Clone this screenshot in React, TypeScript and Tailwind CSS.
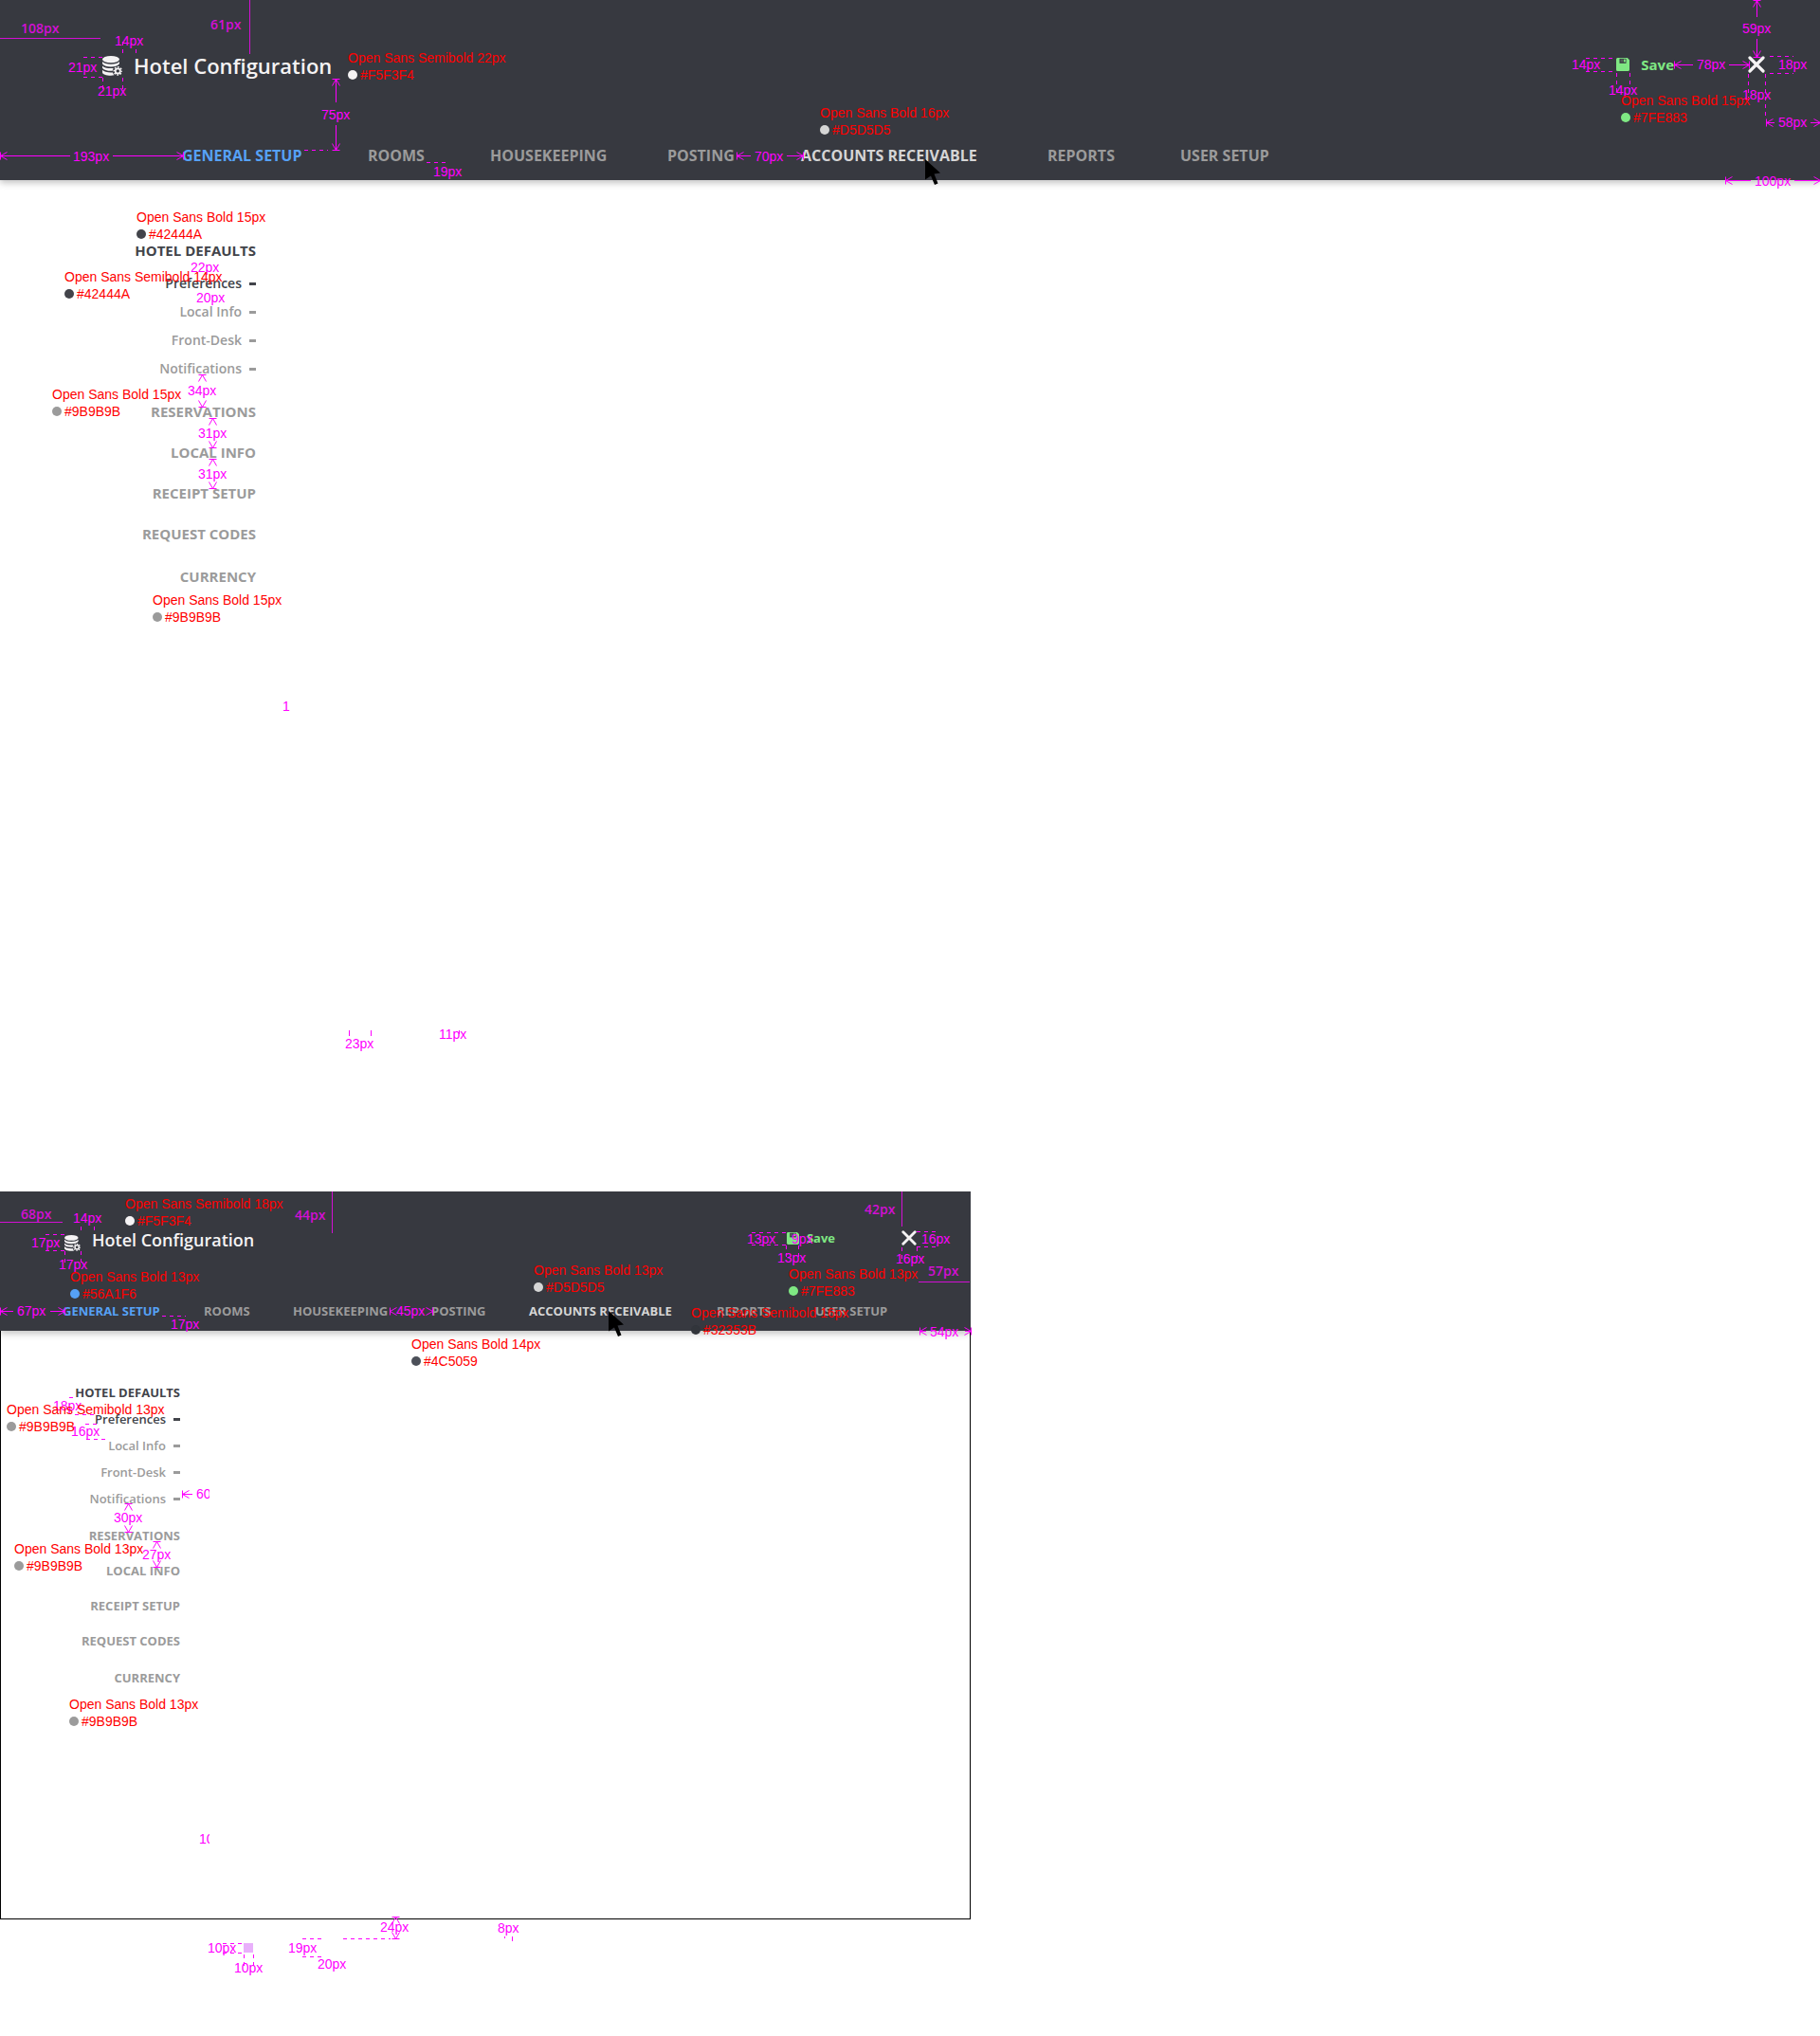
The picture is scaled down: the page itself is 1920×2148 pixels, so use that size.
import React from "react";

type Size = "large" | "compact";

const NAV = ["GENERAL SETUP", "ROOMS", "HOUSEKEEPING", "POSTING", "ACCOUNTS RECEIVABLE", "REPORTS", "USER SETUP"];
const SUB = ["Preferences", "Local Info", "Front-Desk", "Notifications"];
const SECTIONS = ["RESERVATIONS", "LOCAL INFO", "RECEIPT SETUP", "REQUEST CODES", "CURRENCY"];

function DatabaseIcon({ className }: { className: string }) {
  return (
    <svg viewBox="0 0 21 21" className={className} fill="#f5f3f4" aria-hidden="true">
      <ellipse cx="9" cy="3.6" rx="9" ry="3.6" />
      <path d="M0 6c1.600 1.900 5 2.700 9 2.700s7.400-.8 9-2.700v2.300c-1.600 2.200-5 3.100-9 3.100s-7.400-.9-9-3.100z" />
      <path d="M0 10.400c1.600 1.900 5 2.700 9 2.700 1 0 1.900 0 2.700-.1-.6.800-.9 1.700-1 2.700-.6.100-1.100.1-1.700.1-4 0-7.400-.9-9-3.100z" />
      <path d="M0 14.800c1.600 1.900 5 2.700 9 2.700h2c.2 1.100.8 2.100 1.500 2.800-1.100.3-2.300.4-3.500.4-5 0-9-1.500-9-3.500z" />
      <circle cx="16.300" cy="15.900" r="2.600" fill="none" stroke="#f5f3f4" strokeWidth="1.800" />
      <circle cx="16.300" cy="15.900" r="4.100" fill="none" stroke="#f5f3f4" strokeWidth="1.500" strokeDasharray="1.800 1.420" strokeDashoffset="0.900" />
    </svg>
  );
}

function SaveIcon({ className }: { className: string }) {
  return (
    <svg viewBox="0 0 14 14" className={className} aria-hidden="true">
      <path d="M1.500 0h10.300L14 2.200v10.300a1.500 1.500 0 0 1-1.500 1.500h-11A1.500 1.500 0 0 1 0 12.500v-11A1.500 1.500 0 0 1 1.500 0z" fill="#7fe883" />
      <path d="M3.500 0.800h7v5h-7z" fill="#373940" />
      <path d="M4.500 1.500h2.500v3h-2.500z" fill="#55625a" />
      <path d="M7.800 1.500h2v3h-2z" fill="#7fe883" />
    </svg>
  );
}

function CloseIcon({ className }: { className: string }) {
  return (
    <svg viewBox="0 0 18 18" className={className} aria-hidden="true">
      <path d="M2 2l14 14M16 2L2 16" stroke="#f5f3f4" strokeWidth="3.200" strokeLinecap="round" />
    </svg>
  );
}

function Header({ size }: { size: Size }) {
  const big = size === "large";
  return (
    <header
      className={
        big
          ? "relative z-10 bg-[#373940] pt-[53px] pb-[14px] shadow-[0_3px_7px_rgba(0,0,0,0.24)]"
          : "relative z-10 bg-[#373940] pt-[39px] pb-[11px] shadow-[0_3px_7px_rgba(0,0,0,0.24)]"
      }
    >
      <div className={big ? "flex items-start justify-between pl-[108px] pr-[58px]" : "flex items-start justify-between pl-[68px] pr-[57px]"}>
        <div className={big ? "flex items-center gap-3" : "flex items-end gap-3"}>
          <DatabaseIcon className={big ? "size-[21px]" : "size-[17px]"} />
          <h1 className={big ? "text-[22px] leading-8 font-semibold text-[#f5f3f4]" : "text-[18px] leading-6 font-semibold text-[#f5f3f4]"}>
            Hotel Configuration
          </h1>
        </div>
        <div className={big ? "flex h-[30px] items-center gap-[78px]" : "flex h-5 items-center gap-[70px]"}>
          <button
            type="button"
            className={
              big
                ? "flex items-center gap-3 text-[15px] leading-5 font-bold text-[#7fe883]"
                : "flex items-center gap-2 text-[13px] leading-5 font-bold text-[#7fe883]"
            }
          >
            <SaveIcon className={big ? "size-[14px]" : "size-[13px]"} />
            Save
          </button>
          <button type="button" aria-label="Close">
            <CloseIcon className={big ? "size-[18px]" : "size-4"} />
          </button>
        </div>
      </div>
      <nav
        className={
          big
            ? "mt-[67px] grid grid-cols-[196px_129px_187px_141px_260px_140px_auto] pl-[192px] text-[16px] leading-6 font-bold text-[#9b9b9b]"
            : "mt-[53px] grid grid-cols-[149px_94px_146px_103px_198px_104px_auto] pl-[66px] text-[13px] leading-5 font-bold text-[#9b9b9b]"
        }
      >
        {NAV.map((n, i) => (
          <a key={n} href="#" className={i === 0 ? "whitespace-nowrap text-[#56a1f6]" : i === 4 ? "whitespace-nowrap text-[#d5d5d5]" : "whitespace-nowrap"}>
            {n}
          </a>
        ))}
      </nav>
    </header>
  );
}

function SideMenu({ size }: { size: Size }) {
  const big = size === "large";
  return (
    <aside
      className={
        big
          ? "w-[270px] pt-[58px] text-right text-[15px] font-bold text-[#9b9b9b]"
          : "w-[189px] pt-[51px] text-right text-[13px] font-bold text-[#9b9b9b]"
      }
    >
      <a href="#" className={big ? "block leading-8 text-[#42444a]" : "block leading-7 text-[#42444a]"}>
        HOTEL DEFAULTS
      </a>
      <ul className={big ? "mt-1 text-[14px] leading-[30px] font-semibold" : "text-[13px] leading-7 font-semibold"}>
        {SUB.map((s, i) => (
          <li key={s} className={i === 0 ? "text-[#42444a]" : ""}>
            <a href="#" className="flex items-center justify-end gap-2">
              {s}
              <span className="h-[3px] w-[7px] bg-current" />
            </a>
          </li>
        ))}
      </ul>
      <ul className={big ? "mt-[9px] leading-[43px]" : "mt-[7px] leading-[37px]"}>
        {SECTIONS.map((s) => (
          <li key={s} className="last:mt-0.5">
            <a href="#">{s}</a>
          </li>
        ))}
      </ul>
    </aside>
  );
}

function Note({ at, swatch, font, code }: { at: string; swatch: string; font: string; code: string }) {
  return (
    <div className={"absolute font-['Liberation_Sans',sans-serif] text-[14px] leading-[18px] whitespace-nowrap text-[#ff0000] " + at}>
      <p>{font}</p>
      <p className="flex items-center gap-[3px]">
        <span className={"size-[10px] rounded-full " + swatch} />
        {code}
      </p>
    </div>
  );
}

/* [x, baseline, text] */
const LABELS: [number, number, string][] = [
  [121, 48, "14px"], [72, 76, "21px"], [103, 101, "21px"], [339, 126, "75px"], [77, 170, "193px"],
  [457, 186, "19px"], [796, 170, "70px"], [1838, 35, "59px"], [1876, 73, "18px"], [1658, 73, "14px"],
  [1697, 100, "14px"], [1790, 73, "78px"], [1838, 105, "18px"], [1876, 134, "58px"], [1851, 196, "100px"],
  [201, 287, "22px"], [207, 319, "20px"], [198, 417, "34px"], [209, 462, "31px"], [209, 505, "31px"],
  [298, 750, "1"], [364, 1106, "23px"], [463, 1096, "11px"],
  [77, 1290, "14px"], [33, 1316, "17px"], [62, 1339, "17px"], [18, 1388, "67px"], [180, 1402, "17px"],
  [418, 1388, "45px"], [788, 1312, "13px"], [835, 1312, "9px"], [820, 1332, "13px"], [972, 1312, "16px"],
  [945, 1333, "16px"], [981, 1410, "54px"], [56, 1488, "18px"], [75, 1515, "16px"], [120, 1606, "30px"],
  [150, 1645, "27px"], [219, 2060, "10px"], [247, 2081, "10px"], [304, 2060, "19px"], [335, 2077, "20px"],
  [401, 2038, "24px"], [525, 2039, "8px"],
];

const OPEN_LABELS: [number, number, string][] = [
  [22, 35, "108px"], [222, 31, "61px"], [22, 1286, "68px"], [311, 1287, "44px"], [912, 1281, "42px"], [979, 1346, "57px"],
];

/* Arrow heads with an end cap: [tip x, tip y, rotation] where 0 points left */
const HEADS: [number, number, number][] = [
  [0, 164, 0], [193, 164, 180], [354, 83, 90], [354, 158, 270], [777, 164, 0], [847, 164, 180],
  [1853, 0, 90], [1853, 60, 270], [1766, 68, 0], [1845, 68, 180], [1863, 129, 0], [1920, 129, 180],
  [1820, 190, 0], [1920, 190, 180], [213, 395, 90], [213, 429, 270], [224, 441, 90], [224, 472, 270],
  [224, 484, 90], [224, 515, 270], [0, 1383, 0], [68, 1383, 180], [411, 1383, 0], [456, 1383, 180],
  [970, 1404, 0], [1024, 1404, 180], [192, 1576, 0], [135, 1586, 90], [135, 1616, 270], [165, 1626, 90],
  [165, 1653, 270], [417, 2022, 90], [417, 2045, 270],
];

function Dimensions() {
  return (
    <svg viewBox="0 0 1920 2148" className="absolute top-0 left-0 h-[2148px] w-[1920px]" aria-hidden="true">
      <defs>
        <clipPath id="edge">
          <path d="M0 1560h221v400H0z" />
        </clipPath>
      </defs>
      <path d="M257 2050h10v10h-10z" fill="#e9b0fb" />
      <g fill="none" stroke="#d30fd4">
        <path d="M0 40.500H106M263.500 0V57M0 1289.500H66M350.500 1257V1301M951.500 1257V1294M969 1352.500H1023" />
      </g>
      <g fill="none" stroke="#ff00ff">
        <path d="M0 164.500H74M119 164.500H193M354.500 83V108M354.500 132V158M777 164.500H792M830 164.500H847M1853.500 0V18M1853.500 41V60M1766 68.500H1786M1824 68.500H1845M1863 129.500H1872M1910 129.500H1920M1820 190.500H1847M1893 190.500H1920M0 1383.500H14M53 1383.500H68M192 1576.500H203M970 1404.500H977M1018 1404.500H1024" />
        <path d="M368.500 1087v6M391.500 1087v6M484.500 1087v4M532.500 2043v2M540.500 2043v5" />
        <path
          strokeDasharray="4 4"
          d="M129.500 44V58M143.500 52V58M88 60.500H108M88 81.500H108M108.500 82V98M129.500 82V98M321 158.500H346M450 171.500H473M1867 59.500H1892M1867 77.500H1892M1673 61.500H1705M1673 75.500H1705M1705.500 77V97M1719.500 77V97M1844.500 78V106M1862.500 78V122M85.500 1294V1300M99.500 1294V1300M48 1302.500H69M48 1319.500H69M68.500 1320V1334M85.500 1320V1334M171 1388.500H196M793 1300.500H829M793 1313.500H829M829.500 1314V1328M842.500 1314V1328M967 1299.500H988M967 1315.500H988M951.500 1316V1330M967.500 1316V1330M73 1474.500H78M79 1492.500H103M90 1502.500H103M91 1518.500H115M235 2050.500H257M235 2060.500H257M257.500 2062V2078M267.500 2062V2078M319 2045.500H341M319 2064.500H341M362 2045.500H412"
        />
        {HEADS.map(([x, y, r]) => (
          <path key={x + "-" + y + "-" + r} d="M0 -4V4M7 -4L0 0L7 4" transform={`translate(${x + 0.5} ${y + 0.5}) rotate(${r})`} />
        ))}
      </g>
      <g fill="#ff00ff" className="font-['Liberation_Sans',sans-serif] text-[14px]">
        {LABELS.map(([x, y, t]) => (
          <text key={x + "-" + y} x={x} y={y}>
            {t}
          </text>
        ))}
        <g clipPath="url(#edge)">
          <text x="207" y="1581">60px</text>
          <text x="210" y="1945">10px</text>
        </g>
      </g>
      <g fill="#d30fd4" className="font-['Open_Sans',sans-serif] text-[14px] font-semibold">
        {OPEN_LABELS.map(([x, y, t]) => (
          <text key={x + "-" + y} x={x} y={y}>
            {t}
          </text>
        ))}
      </g>
    </svg>
  );
}

function Cursor({ at }: { at: string }) {
  return (
    <svg viewBox="0 0 17 28" className={"absolute z-20 h-7 w-[17px] " + at} aria-hidden="true">
      <path d="M0 0L16 14.500L9.500 15.500L13.500 25.500L10 27L6 17.500L0 21.500Z" fill="#000" />
    </svg>
  );
}

export default function App() {
  return (
    <div className="relative min-h-[2148px] overflow-hidden bg-white font-['Open_Sans',sans-serif]">
      <section>
        <Header size="large" />
        <main className="min-h-[1067px]">
          <SideMenu size="large" />
        </main>
      </section>

      <section className="max-w-[1024px] overflow-hidden">
        <Header size="compact" />
        <div className="min-h-[621px] border-x border-b border-black">
          <SideMenu size="compact" />
        </div>
      </section>

      <div className="pointer-events-none absolute inset-0 z-20">
        <Dimensions />
        <Note at="left-[367px] top-[52px]" swatch="bg-[#f5f3f4]" font="Open Sans Semibold 22px" code="#F5F3F4" />
        <Note at="left-[865px] top-[110px]" swatch="bg-[#d5d5d5]" font="Open Sans Bold 16px" code="#D5D5D5" />
        <Note at="left-[1710px] top-[97px]" swatch="bg-[#7fe883]" font="Open Sans Bold 15px" code="#7FE883" />
        <Note at="left-[144px] top-[220px]" swatch="bg-[#42444a]" font="Open Sans Bold 15px" code="#42444A" />
        <Note at="left-[68px] top-[283px]" swatch="bg-[#42444a]" font="Open Sans Semibold 14px" code="#42444A" />
        <Note at="left-[55px] top-[407px]" swatch="bg-[#9b9b9b]" font="Open Sans Bold 15px" code="#9B9B9B" />
        <Note at="left-[161px] top-[624px]" swatch="bg-[#9b9b9b]" font="Open Sans Bold 15px" code="#9B9B9B" />
        <Note at="left-[132px] top-[1261px]" swatch="bg-[#f5f3f4]" font="Open Sans Semibold 18px" code="#F5F3F4" />
        <Note at="left-[74px] top-[1338px]" swatch="bg-[#56a1f6]" font="Open Sans Bold 13px" code="#56A1F6" />
        <Note at="left-[563px] top-[1331px]" swatch="bg-[#d5d5d5]" font="Open Sans Bold 13px" code="#D5D5D5" />
        <Note at="left-[832px] top-[1335px]" swatch="bg-[#7fe883]" font="Open Sans Bold 13px" code="#7FE883" />
        <Note at="left-[729px] top-[1376px]" swatch="bg-[#32353b]" font="Open Sans Semibold 16px" code="#32353B" />
        <Note at="left-[434px] top-[1409px]" swatch="bg-[#4c5059]" font="Open Sans Bold 14px" code="#4C5059" />
        <Note at="left-[7px] top-[1478px]" swatch="bg-[#9b9b9b]" font="Open Sans Semibold 13px" code="#9B9B9B" />
        <Note at="left-[15px] top-[1625px]" swatch="bg-[#9b9b9b]" font="Open Sans Bold 13px" code="#9B9B9B" />
        <Note at="left-[73px] top-[1789px]" swatch="bg-[#9b9b9b]" font="Open Sans Bold 13px" code="#9B9B9B" />
        <Cursor at="left-[976px] top-[168px]" />
        <Cursor at="left-[642px] top-[1383px]" />
      </div>
    </div>
  );
}
